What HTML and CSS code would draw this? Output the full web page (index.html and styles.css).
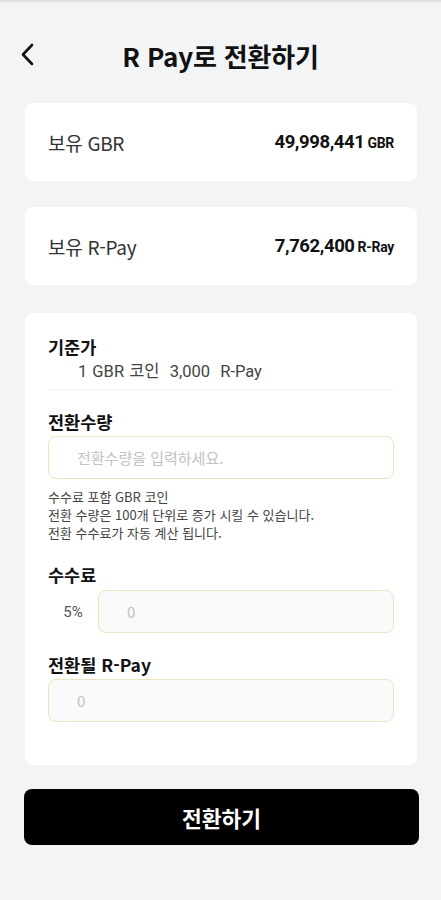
FILE: index.html
```html
<!DOCTYPE html>
<html lang="ko">
<head>
    <meta charset="UTF-8">
    <meta name="viewport" content="width=device-width, initial-scale=1.0">
    <title>R Pay로 전환하기</title>
    <link rel="stylesheet" href="styles.css">
</head>
<body>
    <div class="page">
        <header class="header">
            <button class="back" type="button" aria-label="뒤로">
                <svg width="16" height="24" viewBox="0 0 16 24">
                    <path d="M12 2 L3 11.5 L12 21" fill="none" stroke="#111" stroke-width="2.6" stroke-linecap="round" stroke-linejoin="round"/>
                </svg>
            </button>
            <h1 class="title">R Pay로 전환하기</h1>
            <span></span>
        </header>

        <div class="card balance">
            <span class="balance-label">보유 GBR</span>
            <span class="balance-value">49,998,441<small>GBR</small></span>
        </div>
        <div class="card balance second">
            <span class="balance-label">보유 R-Pay</span>
            <span class="balance-value">7,762,400<small>R-Ray</small></span>
        </div>

        <form class="card convert" id="convert-form">
            <h3 class="field-title first">기준가</h3>
            <p class="rate">1 GBR 코인&nbsp; 3,000&nbsp; R-Pay</p>
            <hr class="divider">

            <h3 class="field-title">전환수량</h3>
            <input class="field" type="text" id="amount" placeholder="전환수량을 입력하세요.">
            <div class="help">
                <p>수수료 포함 GBR 코인</p>
                <p>전환 수량은 100개 단위로 증가 시킬 수 있습니다.</p>
                <p>전환 수수료가 자동 계산 됩니다.</p>
            </div>

            <h3 class="field-title">수수료</h3>
            <div class="fee-row">
                <span class="percent">5%</span>
                <input class="field readonly" type="text" id="fee" placeholder="0" readonly>
            </div>

            <h3 class="field-title">전환될 R-Pay</h3>
            <input class="field readonly" type="text" id="result" placeholder="0" readonly>
        </form>

        <button class="submit" type="submit" form="convert-form">전환하기</button>
    </div>
</body>
</html>
```

FILE: styles.css
```css
body {
    margin: 0;
    background-color: #f3f4f6;
    font-family: Roboto, "Noto Sans CJK KR", sans-serif;
    color: #111;
}
.page {
    border-top: 2px solid #dedfe1;
    min-height: 898px;
}
.header {
    display: grid;
    grid-template-columns: 48px 1fr 48px;
    align-items: center;
    height: 56px;
    padding-top: 25px;
}
.back {
    background: none;
    border: none;
    padding: 0 0 0 20px;
    display: flex;
    align-items: center;
    cursor: pointer;
}
.title {
    margin: 0;
    text-align: center;
    font-family: "Noto Sans CJK KR", sans-serif;
    font-size: 26px;
    font-weight: 700;
    color: #111;
    letter-spacing: -0.2px;
}
.card {
    background: white;
    border-radius: 8px;
    margin: 0 24px 0 25px;
}
.balance {
    display: flex;
    justify-content: space-between;
    align-items: center;
    height: 78px;
    padding: 0 23px;
    margin-top: 20px;
}
.balance.second {
    margin-top: 26px;
}
.balance-label {
    font-family: "Noto Sans CJK KR", sans-serif;
    font-size: 19px;
    font-weight: 400;
    color: #333;
    letter-spacing: -0.3px;
}
.balance-value {
    font-size: 18.5px;
    font-weight: 700;
    color: #111;
    letter-spacing: -0.4px;
}
.balance-value small {
    font-size: 14px;
    margin-left: 3px;
    letter-spacing: -0.3px;
}
.convert {
    margin-top: 28px;
    padding: 22px 23px 43px;
    display: flex;
    flex-direction: column;
}
.field-title {
    margin: 20px 0 2px;
    font-family: "Noto Sans CJK KR", sans-serif;
    font-size: 17.5px;
    line-height: 24px;
    font-weight: 700;
    color: #111;
}
.field-title.first {
    margin-top: 0;
}
.rate {
    margin: 0;
    padding-left: 30px;
    font-size: 16.5px;
    line-height: 22px;
    color: #444;
    word-spacing: 1px;
}
.divider {
    border: none;
    border-top: 1px solid #f0f0f0;
    margin: 6px 0 0;
}
.field {
    box-sizing: border-box;
    width: 100%;
    height: 43px;
    border: 1.5px solid #ebe4bf;
    border-radius: 8px;
    background: white;
    padding: 0 28px;
    font-family: "Noto Sans CJK KR", sans-serif;
    font-size: 15px;
    color: #333;
    outline: none;
}
.field::placeholder {
    color: #c2c2c2;
}
.field.readonly {
    background: #fafafa;
}
.help {
    margin-top: 9px;
}
.help p {
    margin: 0;
    font-family: "Noto Sans CJK KR", sans-serif;
    font-size: 13px;
    line-height: 18px;
    color: #444;
}
.help + .field-title {
    margin-top: 21px;
}
.fee-row {
    display: flex;
    align-items: center;
    margin-top: 1px;
}
.percent {
    width: 50px;
    flex-shrink: 0;
    text-align: center;
    font-size: 15px;
    color: #555;
}
.submit {
    display: block;
    width: 395px;
    height: 56px;
    margin: 24px 0 0 24px;
    background-color: #000;
    color: white;
    border: none;
    border-radius: 8px;
    font-family: "Noto Sans CJK KR", sans-serif;
    font-size: 21.5px;
    font-weight: 700;
    cursor: pointer;
}
```
